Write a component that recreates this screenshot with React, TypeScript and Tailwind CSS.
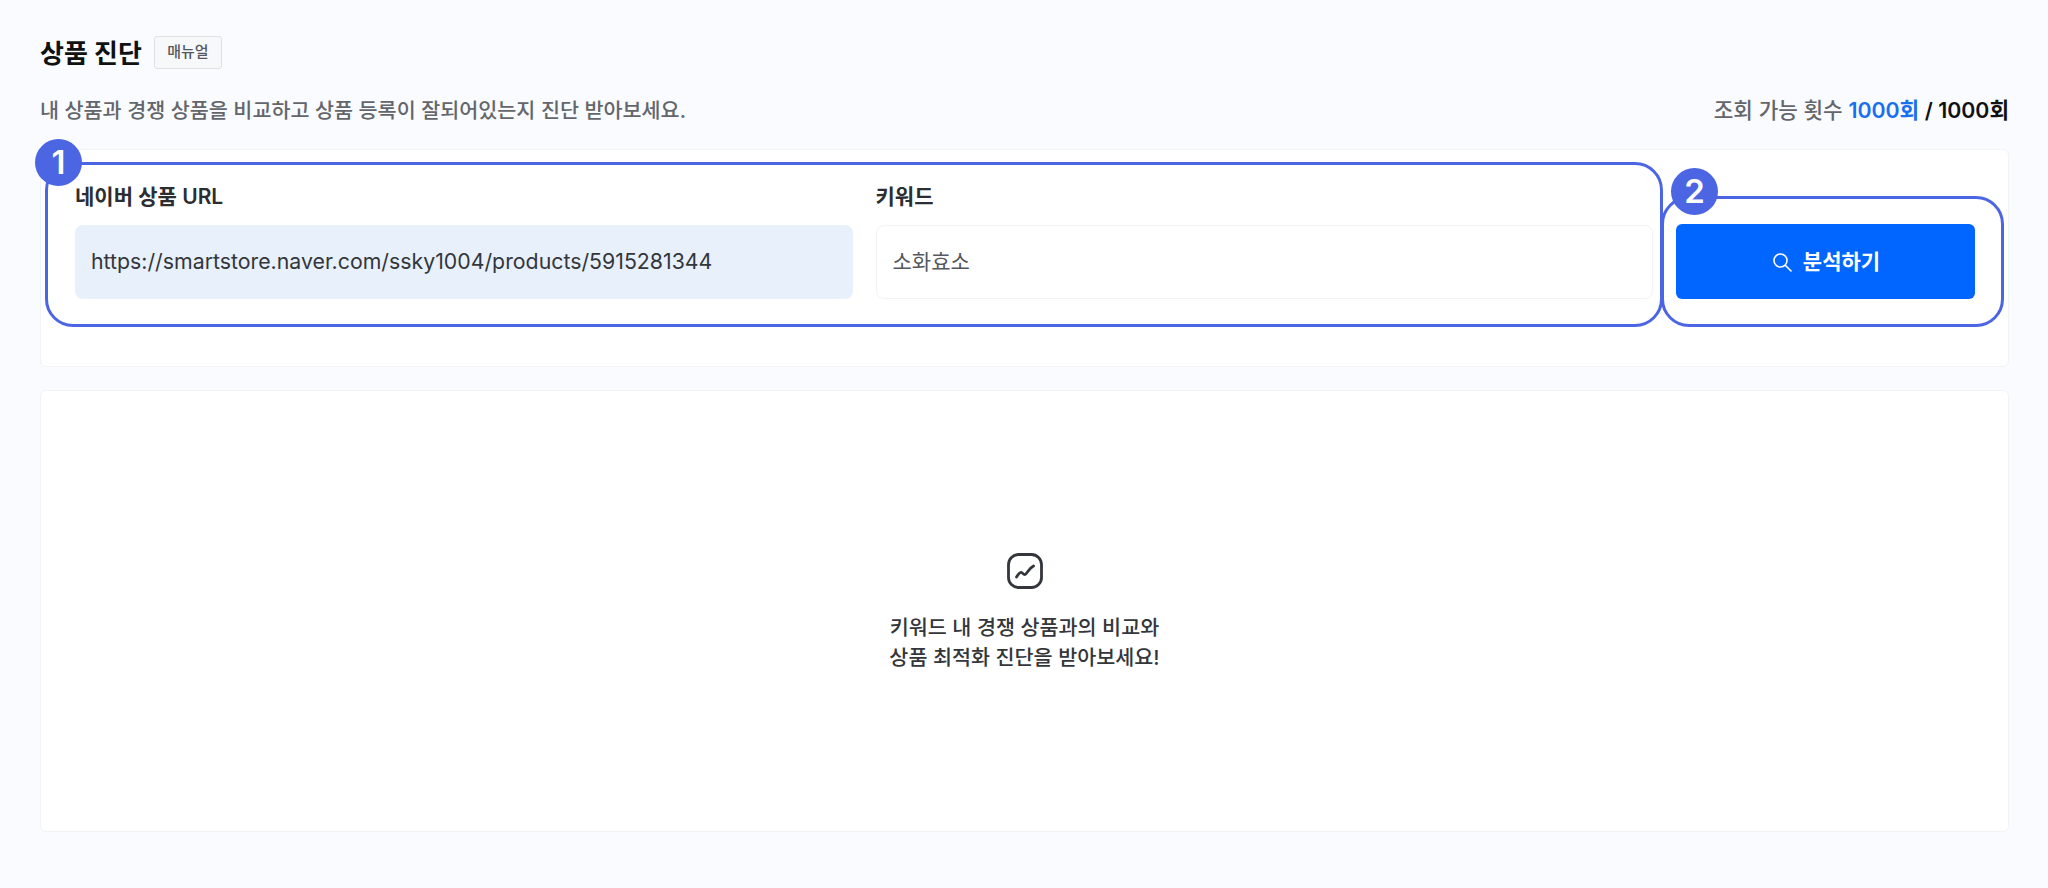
const fontStack = { fontFamily: 'Inter, "Noto Sans CJK KR", sans-serif' };

const Marker = ({ n, className }: { n: string; className: string }) => (
  <div
    className={`absolute flex h-[47px] w-[47px] items-center justify-center rounded-full bg-[#4b65e3] text-[33px] font-semibold leading-none text-white ${className}`}
  >
    {n}
  </div>
);

const Field = ({
  label,
  value,
  className,
}: {
  label: string;
  value: string;
  className: string;
}) => (
  <div className="flex min-w-0 flex-1 flex-col gap-[16px]">
    <label className="text-[21px] font-semibold leading-[24px] text-[#2b2d31]">{label}</label>
    <div className={`flex h-[74px] items-center rounded-[8px] px-[16px] ${className}`}>
      {value}
    </div>
  </div>
);

const App = () => {
  return (
    <div style={fontStack} className="min-h-[888px] bg-[#fafbfe] pl-[40px] pr-[39px] pt-[36px]">
      <div className="flex h-[33px] items-center gap-[12px]">
        <h1 className="pt-[2px] text-[26px] font-bold text-[#111]">상품 진단</h1>
        <button className="flex h-[33px] w-[68px] items-center justify-center rounded-[3px] border border-[#dfe1e6] bg-[#f7f8fa] text-[15px] font-medium text-[#55585e]">
          매뉴얼
        </button>
      </div>

      <div className="mt-[28px] flex h-[28px] items-center justify-between font-medium text-[#63666b]">
        <p className="text-[20.7px]">내 상품과 경쟁 상품을 비교하고 상품 등록이 잘되어있는지 진단 받아보세요.</p>
        <p className="text-[21.3px]">
          조회 가능 횟수 <span className="font-semibold text-[#1a6ff0]">1000회</span>{" "}
          <span className="font-semibold text-[#111]">/ 1000회</span>
        </p>
      </div>

      <section className="relative mt-[24px] flex h-[218px] gap-[23px] rounded-[6px] border border-[#f2f3f6] bg-white pl-[34px] pr-[33px] pt-[35px]">
        <Field
          label="네이버 상품 URL"
          value="https://smartstore.naver.com/ssky1004/products/5915281344"
          className="bg-[#e8f0fc] text-[21.3px] text-[#33363b]"
        />
        <Field label="키워드" value="소화효소" className="border border-[#f2f3f6] bg-white text-[21px] text-[#55585e]" />
        <div className="flex w-[299px] shrink-0 flex-col justify-end pb-[67px]">
          <button className="flex h-[75px] items-center justify-center gap-[10px] rounded-[6px] bg-[#0066ff] text-[21px] font-bold text-white">
            <svg width="22" height="22" viewBox="0 0 22 22" fill="none" stroke="currentColor" strokeWidth="1.6" strokeLinecap="round">
              <circle cx="9.500" cy="9.500" r="6.500" />
              <path d="M14.500 14.500 20 20" />
            </svg>
            분석하기
          </button>
        </div>

        <div className="pointer-events-none absolute left-[4px] top-[12px] h-[165px] w-[1618px] rounded-[28px] border-[3px] border-[#4b65e3]" />
        <div className="pointer-events-none absolute left-[1620px] top-[46px] h-[131px] w-[343px] rounded-[28px] border-[3px] border-[#4b65e3]" />
        <Marker n="1" className="left-[-6px] top-[-11px]" />
        <Marker n="2" className="left-[1630px] top-[18px]" />
      </section>

      <section className="mt-[23px] flex h-[442px] flex-col items-center rounded-[6px] border border-[#f2f3f6] bg-white pt-[162px]">
        <svg width="36" height="36" viewBox="0 0 36 36" fill="none" stroke="#33363b" strokeWidth="2.800" strokeLinecap="round" strokeLinejoin="round">
          <rect x="1.500" y="1.500" width="33" height="33" rx="10" />
          <path d="M9.500 24c2-3 3.500-5 5-4.500 1.500.5 2 2.500 3.500 2 2.500-1 3.500-6 8.500-8.500" />
        </svg>
        <p className="mt-[24px] text-center text-[20.7px] font-medium leading-[30px] text-[#33363b]">
          키워드 내 경쟁 상품과의 비교와
          <br />
          상품 최적화 진단을 받아보세요!
        </p>
      </section>
    </div>
  );
};

export default App;
